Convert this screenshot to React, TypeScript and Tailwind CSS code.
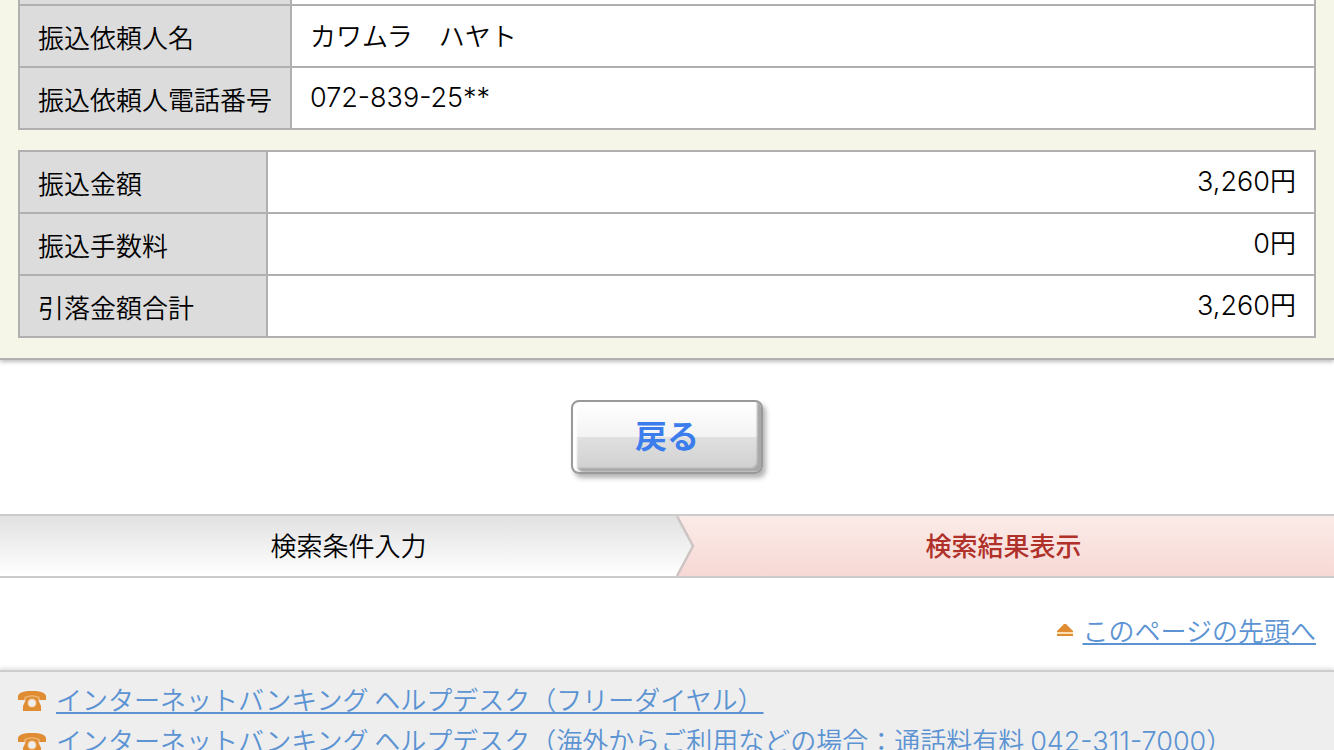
import { ReactNode } from "react";

interface Row {
  label: string;
  value: ReactNode;
}

function Num({ children }: { children: ReactNode }) {
  return (
    <span className="font-['Inter',sans-serif] text-[27px] font-light leading-8">
      {children}
    </span>
  );
}

function Yen({ amount }: { amount: string }) {
  return (
    <>
      <Num>{amount}</Num>円
    </>
  );
}

const clientRows: Row[] = [
  { label: "振込依頼人名", value: "カワムラ　ハヤト" },
  { label: "振込依頼人電話番号", value: <Num>072-839-25**</Num> },
];

const amountRows: Row[] = [
  { label: "振込金額", value: <Yen amount="3,260" /> },
  { label: "振込手数料", value: <Yen amount="0" /> },
  { label: "引落金額合計", value: <Yen amount="3,260" /> },
];

function ClientTable() {
  return (
    <table className="w-full border-collapse bg-white">
      <tbody>
        <tr className="h-[5px]">
          <td className="border-2 border-t-0 border-[#b0b0b0] bg-[#dcdcdc] p-0" />
          <td className="border-2 border-t-0 border-[#b0b0b0] p-0" />
        </tr>
        {clientRows.map((row) => (
          <tr key={row.label} className="h-[62px]">
            <th
              scope="row"
              className="w-[272px] whitespace-nowrap border-2 border-[#b0b0b0] bg-[#dcdcdc] pb-0 pl-[18px] pr-0 pt-0.5 text-left font-[350]"
            >
              {row.label}
            </th>
            <td className="border-2 border-[#b0b0b0] px-[18px] pb-0.5 pt-0">
              {row.value}
            </td>
          </tr>
        ))}
      </tbody>
    </table>
  );
}

function AmountTable() {
  return (
    <table className="mt-5 w-full border-collapse bg-white">
      <tbody>
        {amountRows.map((row) => (
          <tr key={row.label} className="h-[62px]">
            <th
              scope="row"
              className="w-[248px] whitespace-nowrap border-2 border-[#b0b0b0] bg-[#dcdcdc] pb-0 pl-[18px] pr-0 pt-0.5 text-left font-[350]"
            >
              {row.label}
            </th>
            <td className="border-2 border-[#b0b0b0] px-[18px] pb-0.5 pt-0 text-right">
              {row.value}
            </td>
          </tr>
        ))}
      </tbody>
    </table>
  );
}

function Steps() {
  return (
    <ol className="flex h-16 border-y-2 border-[#cbcbcb]">
      <li className="flex w-1/2 items-center justify-center bg-linear-to-b from-[#e1e1e1] to-white pb-0.5 pl-[30px]">
        検索条件入力
      </li>
      <li className="relative flex w-1/2 items-center justify-center bg-linear-to-b from-[#fbebe8] to-[#f7d9d5] pb-0.5 pl-1.5 font-medium text-[#b0302a]">
        <svg
          className="absolute left-0 top-0 h-full w-7"
          viewBox="0 0 28 60"
          preserveAspectRatio="none"
          aria-hidden="true"
        >
          <defs>
            <linearGradient id="step" x1="0" y1="0" x2="0" y2="1">
              <stop offset="0" stopColor="#e1e1e1" />
              <stop offset="1" stopColor="#ffffff" />
            </linearGradient>
          </defs>
          <path d="M0 0H10L26 30L10 60H0Z" fill="url(#step)" />
          <path
            d="M10 0L26 30L10 60"
            fill="none"
            stroke="#cdc4c3"
            strokeWidth="2.5"
          />
        </svg>
        検索結果表示
      </li>
    </ol>
  );
}

function PhoneIcon() {
  return (
    <svg
      className="mt-1 h-5 w-7 shrink-0"
      viewBox="0 0 28 20"
      aria-hidden="true"
    >
      <path
        d="M0 9V5C1 1.5 5 0 14 0S27 1.5 28 5V9H20.5V6.5Q14 3.5 7.5 6.500V9Z"
        fill="#e08c33"
      />
      <path
        d="M7.5 6.5Q14 3.5 20.5 6.5V9.5L23 15V20H5V15L7.5 9.5Z"
        fill="#e08c33"
      />
      <path
        d="M7 9.5V6.5Q14 3 21 6.5V9.5"
        fill="none"
        stroke="#f0bd80"
        strokeWidth="1.2"
      />
      <circle cx="14" cy="12" r="4.5" fill="#f3c48f" />
      <circle cx="14" cy="12" r="3.5" fill="#eeeeee" />
    </svg>
  );
}

function TopIcon() {
  return (
    <svg className="h-3 w-4" viewBox="0 0 16 12" aria-hidden="true">
      <path d="M7 0H9L16 7V8H0V7Z" fill="#e08c33" />
      <path d="M0 8H16V10H0Z" fill="#fbe0b4" />
      <path d="M0 10H16V12H0Z" fill="#e08c33" />
    </svg>
  );
}

function TextLink({ children }: { children: ReactNode }) {
  return (
    <a
      href="#top"
      className="whitespace-nowrap text-[#5b93d3] underline decoration-2 underline-offset-2 [text-decoration-skip-ink:none]"
    >
      {children}
    </a>
  );
}

export default function App() {
  return (
    <div
      id="top"
      className="h-screen overflow-hidden bg-white font-['Noto_Sans_CJK_JP',sans-serif] text-[26px] font-[350] leading-8 text-black"
    >
      <section className="border-b-2 border-[#b0b0b0] bg-[#f5f5e8] px-[18px] pb-5 shadow-[0_2px_4px_rgba(0,0,0,0.25)]">
        <ClientTable />
        <AmountTable />
      </section>

      <div className="flex justify-center py-10">
        <button
          type="button"
          className="h-[74px] w-48 rounded-lg border-2 border-[#999999] bg-[linear-gradient(#ffffff,#f3f3f3_50%,#e0e0e0_50%,#cfcfcf)] pb-1.5 text-[32px] font-bold text-[#3b7ded] shadow-[inset_4px_0_2px_#ffffff,inset_-4px_-4px_2px_#a8a8a8,3px_4px_5px_rgba(0,0,0,0.3)]"
        >
          戻る
        </button>
      </div>

      <Steps />

      <div className="flex h-[92px] items-center justify-end gap-[10px] px-[18px] pt-3">
        <TopIcon />
        <TextLink>このページの先頭へ</TextLink>
      </div>

      <footer className="border-t-2 border-[#cdcdcd] bg-[#eeeeee] px-[18px] pt-1.5 shadow-[0_-2px_4px_rgba(0,0,0,0.12)]">
        <ul>
          <li className="flex h-[42px] items-center gap-[10px]">
            <PhoneIcon />
            <TextLink>
              インターネットバンキング ヘルプデスク（フリーダイヤル）
            </TextLink>
          </li>
          <li className="flex h-[42px] items-center gap-[10px]">
            <PhoneIcon />
            <TextLink>
              インターネットバンキング ヘルプデスク（海外からご利用などの場合：通話料有料{" "}
              <Num>042-311-7000</Num>）
            </TextLink>
          </li>
        </ul>
      </footer>
    </div>
  );
}
